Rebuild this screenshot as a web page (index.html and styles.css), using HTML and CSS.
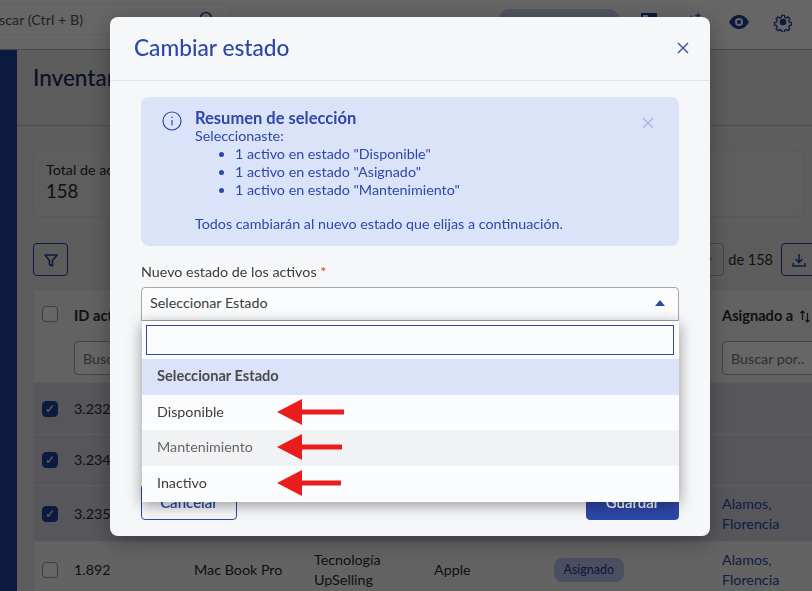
FILE: index.html
```html
<!DOCTYPE html>
<html lang="es">
<head>
    <meta charset="UTF-8">
    <title>Inventario - Cambiar estado</title>
    <link rel="stylesheet" href="styles.css">
</head>
<body>
    <div class="page">
        <header class="topbar">
            <div class="global-search">
                <span>Buscar (Ctrl + B)</span>
                <svg class="icon-search" width="18" height="18" viewBox="0 0 18 18" fill="none" stroke="#2e47a8" stroke-width="1.6"><circle cx="8" cy="8" r="5.5"/><path d="M12 12l4 4"/></svg>
            </div>
            <div class="topbar-right">
                <div class="company-chip"></div>
                <svg width="22" height="22" viewBox="0 0 22 22" fill="none" stroke="#2041a0" stroke-width="2"><rect x="4" y="3" width="14" height="16"/><path d="M11 3v16"/><path d="M12 3h6v7h-6z" fill="#2041a0"/></svg>
                <svg width="22" height="22" viewBox="0 0 22 22" fill="#2041a0"><path d="M8 4l2 6 6 2-6 2-2 6-2-6-6-2 6-2z"/><path d="M15 1l1 2.500 2.500 1-2.500 1-1 2.500-1-2.500-2.500-1 2.500-1z" fill="#3f7fd0"/></svg>
                <svg width="22" height="22" viewBox="0 0 22 22"><path d="M1 11c2.500-4.500 6-7 10-7s7.500 2.500 10 7c-2.500 4.500-6 7-10 7s-7.500-2.500-10-7z" fill="#2041a0"/><circle cx="11" cy="11" r="4" fill="#fff"/><circle cx="11" cy="11" r="2" fill="#2041a0"/></svg>
                <svg width="20" height="20" viewBox="0 0 24 24" fill="none" stroke="#2041a0" stroke-width="2"><circle cx="12" cy="12" r="3" fill="#2041a0"/><path d="M10 2h4l.6 3 2.300 1 2.600-1.600 2.800 2.800-1.600 2.600 1 2.300 3 .6v4l-3 .6-1 2.300 1.600 2.600-2.800 2.800-2.600-1.600-2.300 1-.6 3h-4l-.6-3-2.300-1-2.600 1.600-2.800-2.800 1.600-2.600-1-2.300-3-.6v-4l3-.6 1-2.300-1.600-2.600 2.800-2.800 2.600 1.600 2.300-1z" transform="translate(2.400 2.400) scale(.8)"/></svg>
            </div>
        </header>
        <div class="layout">
            <aside class="sidebar"></aside>
            <main class="content">
                <div class="title-bar"><h2>Inventario</h2></div>
                <div class="inner">
                    <div class="stat-card">
                        <div class="stat-label">Total de activos</div>
                        <div class="stat-value">158</div>
                    </div>
                    <div class="toolbar">
                        <button class="icon-btn">
                            <svg width="16" height="16" viewBox="0 0 16 16" fill="none" stroke="#2041a0" stroke-width="1.6" stroke-linejoin="round"><path d="M2 3h12L9.500 8.500V14l-3-1.500v-4z"/></svg>
                        </button>
                        <div class="pager">
                            <div class="page-size">
                                <svg width="10" height="6" viewBox="0 0 10 6" fill="none" stroke="#555" stroke-width="1.4"><path d="M1 1l4 4 4-4"/></svg>
                            </div>
                            <span>de 158</span>
                            <button class="icon-btn">
                                <svg width="16" height="16" viewBox="0 0 16 16" fill="none" stroke="#2041a0" stroke-width="1.5"><path d="M8 2v8M4.500 7L8 10.500 11.500 7M2 11v3h12v-3"/></svg>
                            </button>
                        </div>
                    </div>
                    <div class="table">
                        <div class="row head">
                            <div class="check-cell"><span class="check"></span></div>
                            <div class="cell">
                                <b>ID activo</b>
                                <input class="filter" placeholder="Buscar por..">
                            </div>
                            <div class="cell"></div>
                            <div class="cell"></div>
                            <div class="cell"></div>
                            <div class="cell"></div>
                            <div class="cell">
                                <b>Asignado a
                                    <svg class="sort" width="12" height="14" viewBox="0 0 12 14" fill="none" stroke="#2b2b2b" stroke-width="1.2"><path d="M3.500 11V2M1.500 4l2-2 2 2M8.500 4v9M6.500 11l2 2 2-2"/></svg>
                                </b>
                                <input class="filter" placeholder="Buscar por..">
                            </div>
                        </div>
                        <div class="row selected r1">
                            <div class="check-cell"><span class="check on">✓</span></div>
                            <div class="cell">3.232</div>
                        </div>
                        <div class="row selected r2">
                            <div class="check-cell"><span class="check on">✓</span></div>
                            <div class="cell">3.234</div>
                        </div>
                        <div class="row selected r3">
                            <div class="check-cell"><span class="check on">✓</span></div>
                            <div class="cell">3.235</div>
                            <div class="cell"></div>
                            <div class="cell"></div>
                            <div class="cell"></div>
                            <div class="cell"></div>
                            <div class="cell link">Alamos, Florencia</div>
                        </div>
                        <div class="row r3">
                            <div class="check-cell"><span class="check"></span></div>
                            <div class="cell">1.892</div>
                            <div class="cell">Mac Book Pro</div>
                            <div class="cell">Tecnología UpSelling</div>
                            <div class="cell">Apple</div>
                            <div class="cell"><span class="badge">Asignado</span></div>
                            <div class="cell link">Alamos, Florencia</div>
                        </div>
                    </div>
                </div>
            </main>
        </div>
    </div>

    <div class="overlay"></div>

    <div class="modal">
        <div class="modal-header">
            <h1>Cambiar estado</h1>
            <svg width="14" height="14" viewBox="0 0 14 14" stroke="#2e47a8" stroke-width="1.3"><path d="M2 2l10 10M12 2L2 12"/></svg>
        </div>
        <div class="modal-body">
            <div class="alert">
                <svg class="alert-icon" width="20" height="20" viewBox="0 0 20 20" fill="none" stroke="#2e47a8" stroke-width="1.2"><circle cx="10" cy="10" r="9"/><path d="M10 9v5.500M10 5.500v1.400"/></svg>
                <div class="alert-text">
                    <div class="alert-title">Resumen de selección</div>
                    <div>Seleccionaste:</div>
                    <ul>
                        <li>1 activo en estado "Disponible"</li>
                        <li>1 activo en estado "Asignado"</li>
                        <li>1 activo en estado "Mantenimiento"</li>
                    </ul>
                    <div>Todos cambiarán al nuevo estado que elijas a continuación.</div>
                </div>
                <svg class="alert-close" width="14" height="14" viewBox="0 0 14 14" stroke="#a9b5e0" stroke-width="1.2"><path d="M2 2l10 10M12 2L2 12"/></svg>
            </div>

            <label class="field-label">Nuevo estado de los activos <span class="req">*</span></label>
            <div class="select-wrap">
                <div class="select">
                    <span>Seleccionar Estado</span>
                    <span class="caret"></span>
                </div>
                <div class="dropdown">
                    <div class="dropdown-search"><input type="text"></div>
                    <div class="option active">Seleccionar Estado</div>
                    <div class="option">Disponible</div>
                    <div class="option hover">Mantenimiento</div>
                    <div class="option">Inactivo</div>
                    <svg class="arrow arrow-1" width="67" height="26" viewBox="0 0 67 26" fill="#ea1c1c"><path d="M0 13L25 0v10.500h42v5H25V26z"/></svg>
                    <svg class="arrow arrow-2" width="65" height="26" viewBox="0 0 65 26" fill="#ea1c1c"><path d="M0 13L25 0v10.500h40v5H25V26z"/></svg>
                    <svg class="arrow arrow-3" width="64" height="26" viewBox="0 0 64 26" fill="#ea1c1c"><path d="M0 13L25 0v10.500h39v5H25V26z"/></svg>
                </div>
            </div>

            <div class="modal-footer">
                <button class="btn btn-outline">Cancelar</button>
                <button class="btn btn-primary">Guardar</button>
            </div>
        </div>
    </div>
</body>
</html>
```

FILE: styles.css
```css
* {
    box-sizing: border-box;
}
html, body {
    margin: 0;
    height: 100%;
    overflow: hidden;
}
body {
    font-family: 'Lato', 'Noto Sans', Arial, sans-serif;
    font-size: 14.3px;
    color: #2b2b2b;
}
.page {
    width: 812px;
    height: 591px;
    overflow: hidden;
    background: #e8e8e8;
}

/* top bar */
.topbar {
    height: 50px;
    background: #fff;
    border-bottom: 1px solid #b5b5b5;
    display: flex;
    align-items: flex-start;
    justify-content: space-between;
    padding-top: 3px;
}
.global-search {
    width: 259px;
    height: 32px;
    margin-left: -28px;
    border: 1px solid #f0f0f0;
    border-radius: 6px;
    display: flex;
    align-items: center;
    justify-content: space-between;
    padding: 0 14px 0 9px;
    color: #555;
}
.topbar-right {
    display: flex;
    align-items: center;
    gap: 23px;
    padding: 6px 19px 0 0;
}
.company-chip {
    width: 120px;
    height: 26px;
    background: #c8d2f0;
    border-radius: 10px;
    margin-right: -4px;
}

/* page layout */
.layout {
    display: flex;
    height: 541px;
}
.sidebar {
    width: 17px;
    background: #2141a0;
    flex-shrink: 0;
}
.content {
    flex: 1;
    min-width: 0;
}
.title-bar {
    height: 76px;
    padding: 14px 16px;
    border-bottom: 1px solid #c4c4c4;
}
.title-bar h2 {
    margin: 0;
    font-size: 22.5px;
    font-weight: 500;
    color: #1a2a66;
}
.inner {
    padding: 24px 0 0 16px;
}
.stat-card {
    width: 772px;
    height: 67px;
    border: 1px solid #dcdcdc;
    border-radius: 8px;
    padding: 10px 12px;
    background: #eaeaea;
}
.stat-label {
    line-height: 18px;
}
.stat-value {
    font-size: 18.500px;
    line-height: 24px;
}
.toolbar {
    display: flex;
    justify-content: space-between;
    margin-top: 26px;
    width: 783px;
}
.icon-btn {
    width: 35px;
    height: 33px;
    border: 1px solid #2141a0;
    border-radius: 4px;
    background: none;
    padding: 0;
    display: flex;
    align-items: center;
    justify-content: center;
}
.pager {
    display: flex;
    align-items: center;
    gap: 8px;
}
.pager span {
    font-size: 14.5px;
}
.page-size {
    width: 60px;
    height: 33px;
    border: 1px solid #aaa;
    border-radius: 4px;
    margin-right: -4px;
    display: flex;
    align-items: center;
    justify-content: flex-end;
    padding-right: 11px;
}

/* table */
.table {
    margin-top: 13px;
    width: 860px;
    border: 1px solid #dedede;
    background: #f8f8f8;
}
.row {
    display: grid;
    grid-template-columns: 40px 120px 120px 120px 120px 168px 172px;
    border-bottom: 1px solid #ececec;
    align-items: center;
}
.row.head {
    height: 93px;
    align-items: start;
    background: #f4f4f4;
    padding-top: 16px;
}
.r1 {
    height: 52px;
}
.r2 {
    height: 51px;
}
.r3 {
    height: 56px;
}
.row.selected {
    background: #d8d8e4;
}
.check-cell {
    padding-left: 8px;
}
.check {
    display: block;
    width: 16px;
    height: 16px;
    border: 1px solid #999;
    border-radius: 4px;
    background: #fff;
    font-size: 12px;
    line-height: 14px;
    text-align: center;
}
.check.on {
    background: #2141a0;
    border-color: #2141a0;
    color: #fff;
}
.cell {
    line-height: 20px;
}
.cell b {
    display: flex;
    align-items: center;
    gap: 6px;
    white-space: nowrap;
    font-size: 14.6px;
}
.sort {
    flex-shrink: 0;
}
.filter {
    display: block;
    width: 100px;
    height: 34px;
    margin-top: 15px;
    border: 1px solid #aaa;
    border-radius: 4px;
    padding: 0 8px;
    background: #fff;
    font: inherit;
}
.link {
    color: #2e47a8;
    width: 70px;
}
.badge {
    display: inline-block;
    height: 24px;
    line-height: 24px;
    padding: 0 9.500px;
    border-radius: 8px;
    background: #bcc8f2;
    color: #1f3590;
    font-size: 12.5px;
}

/* modal */
.overlay {
    position: fixed;
    inset: 0;
    background: rgba(0,0,0,0.6);
}
.modal {
    position: fixed;
    left: 110px;
    top: 17px;
    width: 600px;
    height: 519px;
    background: #f6f7f9;
    border-radius: 8px;
    box-shadow: 0 6px 24px rgba(0,0,0,0.3);
}
.modal-header {
    height: 64px;
    border-bottom: 1px solid #e0e3ea;
    display: flex;
    align-items: center;
    justify-content: space-between;
    padding: 0 20px 2px 24px;
}
.modal-header h1 {
    margin: 0;
    font-size: 22.7px;
    font-weight: 500;
    color: #2e47a8;
}
.modal-body {
    padding: 16px 31px 0;
}
.alert {
    height: 149px;
    background: #dbe3f9;
    border-radius: 8px;
    display: flex;
    padding: 12px 24px 0 21px;
    color: #2e47a8;
    line-height: 18px;
}
.alert-icon {
    margin: 2px 13px 0 0;
    flex-shrink: 0;
}
.alert-text {
    flex: 1;
}
.alert-title {
    font-weight: 700;
    font-size: 16.5px;
}
.alert ul {
    margin: 0 0 16px;
    padding-left: 40px;
}
.alert-close {
    margin-top: 7px;
}
.field-label {
    display: block;
    margin-top: 17px;
    line-height: 18px;
    color: #3c3c3c;
}
.req {
    color: #e03131;
}
.select-wrap {
    position: relative;
    margin-top: 6px;
}
.select {
    height: 34px;
    border: 1px solid #a8a8a8;
    border-radius: 4px 4px 0 0;
    background: #fbfcfd;
    display: flex;
    align-items: center;
    justify-content: space-between;
    padding: 0 13px 3px 8px;
    color: #3c3c3c;
}
.caret {
    width: 0;
    height: 0;
    border-left: 5px solid transparent;
    border-right: 5px solid transparent;
    border-bottom: 6px solid #2e47a8;
}
.dropdown {
    position: absolute;
    left: 1px;
    right: 0;
    top: 34px;
    background: #fbfcfd;
    box-shadow: 0 3px 14px rgba(0,0,0,0.4);
    z-index: 2;
}
.dropdown-search {
    padding: 4px 5px 4px 4px;
}
.dropdown-search input {
    display: block;
    width: 100%;
    height: 30px;
    border: 1px solid #2e47a8;
    background: #fbfcfd;
    outline: none;
}
.option {
    height: 35.700px;
    display: flex;
    align-items: center;
    padding: 0 0 2px 15px;
    color: #3c3c3c;
}
.option.active {
    background: #dbe3f9;
    font-weight: 700;
    font-size: 14.6px;
    color: #4a4a4a;
}
.option.hover {
    background: #f1f2f4;
    color: #666;
    padding-bottom: 4px;
}
.arrow {
    position: absolute;
    left: 135px;
}
.arrow-1 {
    top: 78px;
}
.arrow-2 {
    top: 113px;
}
.arrow-3 {
    top: 149px;
}
.modal-footer {
    display: flex;
    justify-content: space-between;
    margin-top: 163px;
}
.btn {
    height: 36px;
    border-radius: 4px;
    font: inherit;
    font-weight: 600;
    font-size: 15px;
}
.btn-outline {
    width: 96px;
    background: none;
    border: 1px solid #2e47a8;
    color: #2e47a8;
}
.btn-primary {
    width: 93px;
    background: #2e47a8;
    border: 1px solid #2e47a8;
    color: #fff;
}
```
